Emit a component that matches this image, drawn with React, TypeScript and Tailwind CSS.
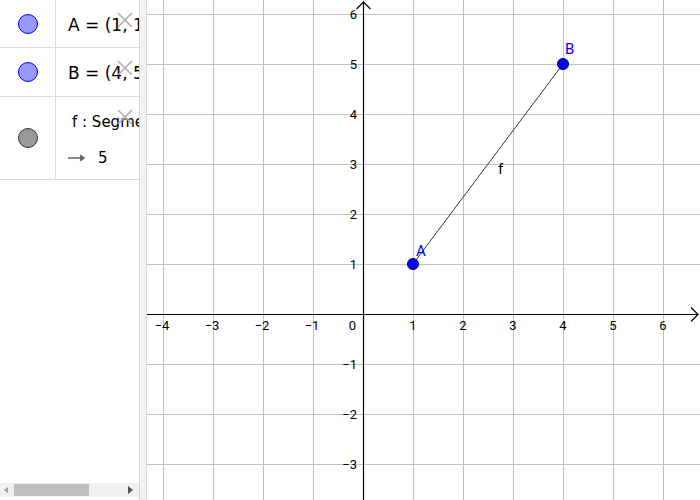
import React from 'react';

const FONT = '"DejaVu Sans", "Liberation Sans", sans-serif';

const CloseMark = () => (
  <svg width="18" height="18" viewBox="0 0 18 18" className="absolute right-[5px] top-[11px]">
    <path d="M2 2 L16 16 M16 2 L2 16" stroke="#b0b0b0" strokeWidth="1.6" fill="none" />
  </svg>
);

const Dot = ({ fill, stroke }: { fill: string; stroke: string }) => (
  <div className="w-[20px] h-[20px] rounded-full border" style={{ backgroundColor: fill, borderColor: stroke }} />
);

const AlgebraRow = ({
  dot,
  height,
  children,
}: {
  dot: React.ReactNode;
  height: string;
  children: React.ReactNode;
}) => (
  <div className={`relative flex border-b border-[#dcdcdc] ${height}`}>
    <div className="w-[56px] shrink-0 border-r border-[#dcdcdc] flex items-center justify-center">{dot}</div>
    <div className="flex-1 overflow-hidden whitespace-nowrap pl-[12px] text-[17px] text-black">{children}</div>
    <CloseMark />
  </div>
);

const AlgebraView = () => (
  <div className="w-[140px] shrink-0 h-full border-r border-[#d6d6d6] bg-white flex flex-col" style={{ fontFamily: FONT }}>
    <AlgebraRow height="h-[48px]" dot={<Dot fill="#9999ff" stroke="#0000ff" />}>
      <div className="pt-[13px]">A = (1, 1)</div>
    </AlgebraRow>
    <AlgebraRow height="h-[49px]" dot={<Dot fill="#9999ff" stroke="#0000ff" />}>
      <div className="pt-[13px]">B = (4, 5)</div>
    </AlgebraRow>
    <AlgebraRow height="h-[83px]" dot={<Dot fill="#999999" stroke="#333333" />}>
      <div className="pt-[14px] pl-[4px] text-[15px]">f : Segment(A, B)</div>
      <div className="pt-[13px] flex items-center gap-[12px] text-[15px]">
        <svg width="18" height="8" viewBox="0 0 18 8">
          <path d="M0 4 H15 M12 1 L16 4 L12 7" stroke="#666" strokeWidth="1.5" fill="#666" />
        </svg>
        <span>5</span>
      </div>
    </AlgebraRow>
    <div className="flex-1" />
    <div className="h-[14px] mb-[3px] bg-[#f0f0f0] flex items-center">
      <svg width="14" height="14" viewBox="0 0 14 14" className="shrink-0">
        <path d="M8 4 L4 7 L8 10 Z" fill="#a0a0a0" />
      </svg>
      <div className="w-[75px] h-[12px] bg-[#c0c0c0]" />
      <div className="flex-1" />
      <svg width="14" height="14" viewBox="0 0 14 14" className="shrink-0 mr-[2px]">
        <path d="M5 3 L10 7 L5 11 Z" fill="#505050" />
      </svg>
    </div>
  </div>
);

const GraphicsView = () => {
  const ox = 363;
  const oy = 314;
  const u = 50;
  const xs = [-4, -3, -2, -1, 1, 2, 3, 4, 5, 6];
  const ys = [6, 5, 4, 3, 2, 1, -1, -2, -3];
  const vLines = [];
  for (let k = -4; k <= 6; k++) vLines.push(ox + k * u);
  const hLines = [];
  for (let k = -3; k <= 6; k++) hLines.push(oy - k * u);
  const label = (n: number) => (n < 0 ? `\u2212${-n}` : `${n}`);
  return (
    <div className="flex-1 h-full bg-white">
      <svg width="553" height="500" viewBox="147 0 553 500" style={{ fontFamily: '"Roboto", "Liberation Sans", sans-serif' }}>
        {vLines.map((x) => (
          <line key={`v${x}`} x1={x + 0.5} y1={0} x2={x + 0.5} y2={500} stroke="#c0c0c0" strokeWidth="1" />
        ))}
        {hLines.map((y) => (
          <line key={`h${y}`} x1={147} y1={y + 0.5} x2={700} y2={y + 0.5} stroke="#c0c0c0" strokeWidth="1" />
        ))}
        {/* axes */}
        <line x1={147} y1={oy + 0.5} x2={698} y2={oy + 0.5} stroke="#000" strokeWidth="1.2" />
        <path d={`M691 ${oy - 6.5} L698 ${oy + 0.5} L691 ${oy + 7.5}`} stroke="#000" strokeWidth="1.2" fill="none" />
        <line x1={ox + 0.5} y1={2} x2={ox + 0.5} y2={500} stroke="#000" strokeWidth="1.2" />
        <path d={`M${ox - 6.5} 9 L${ox + 0.5} 2 L${ox + 7.5} 9`} stroke="#000" strokeWidth="1.2" fill="none" />
        {xs.map((n) => (
          <text key={`xl${n}`} x={ox + n * u + (n < 0 ? -1 : 0)} y={oy + 16} fontSize="13" textAnchor="middle" fill="#000">
            {label(n)}
          </text>
        ))}
        <text x={356} y={oy + 16} fontSize="13" textAnchor="end" fill="#000">0</text>
        {ys.map((n) => (
          <text key={`yl${n}`} x={357} y={oy - n * u + 5} fontSize="13" textAnchor="end" fill="#000">
            {label(n)}
          </text>
        ))}
        {/* segment */}
        <line x1={ox + u} y1={oy - u} x2={ox + 4 * u} y2={oy - 5 * u} stroke="#333" strokeWidth="1" />
        <circle cx={ox + u} cy={oy - u} r="5.5" fill="#0000ff" stroke="#000040" strokeWidth="1" />
        <circle cx={ox + 4 * u} cy={oy - 5 * u} r="5.5" fill="#0000ff" stroke="#000040" strokeWidth="1" />
        <text x={416} y={256} fontSize="15" fill="#0000ff">A</text>
        <text x={565} y={54} fontSize="15" fill="#0000ff">B</text>
        <text x={498} y={174} fontSize="15" fill="#000">f</text>
      </svg>
    </div>
  );
};

export default function App() {
  return (
    <div className="w-[700px] h-[500px] flex overflow-hidden bg-white">
      <AlgebraView />
      <div className="w-[7px] shrink-0 h-full bg-[#f2f2f2] border-r border-[#d6d6d6]" />
      <GraphicsView />
    </div>
  );
}
